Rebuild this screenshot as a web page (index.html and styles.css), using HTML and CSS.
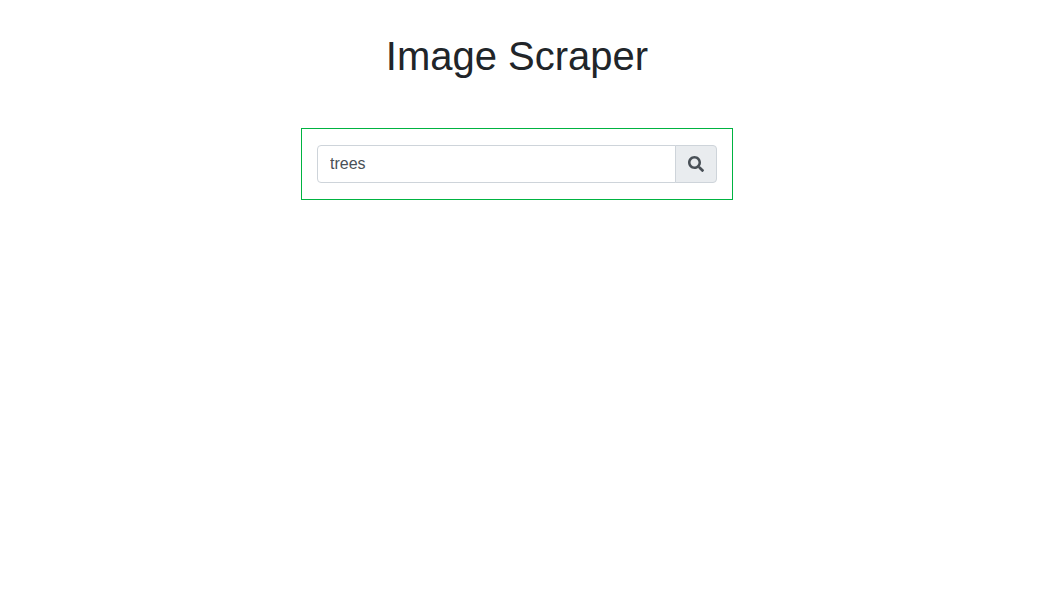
FILE: index.html
```html
<!DOCTYPE html>
<html lang="en">
<head>
<meta charset="utf-8">
<meta name="viewport" content="width=device-width, initial-scale=1">
<title>Image Scraper</title>
<link rel="stylesheet" href="styles.css">
</head>
<body>
<main class="page">
  <h1 class="title">Image Scraper</h1>
  <form class="search-box" role="search">
    <div class="input-group">
      <input class="search-input" type="text" name="query" value="trees" aria-label="Search images">
      <button class="search-button" type="submit" aria-label="Search">
        <svg class="search-icon" viewBox="0 0 512 512" aria-hidden="true"><path fill="currentColor" d="M505 442.7L405.3 343c-4.500-4.500-10.600-7-17-7H372c27.600-35.300 44-79.700 44-128C416 93.100 322.900 0 208 0S0 93.100 0 208s93.100 208 208 208c48.300 0 92.700-16.400 128-44v16.300c0 6.400 2.500 12.500 7 17l99.700 99.700c9.400 9.400 24.600 9.400 33.900 0l28.300-28.300c9.400-9.400 9.400-24.600.1-34zM208 336c-70.700 0-128-57.200-128-128 0-70.700 57.200-128 128-128 70.700 0 128 57.200 128 128 0 70.700-57.200 128-128 128z"/></svg>
      </button>
    </div>
  </form>
</main>
</body>
</html>
```
FILE: styles.css
```css
* {
  box-sizing: border-box;
}

body {
  margin: 0;
  background: #fff;
  color: #212529;
  font: 16px/24px "Liberation Sans", Arial, sans-serif;
}

.page {
  display: flex;
  flex-direction: column;
  align-items: center;
  gap: 48px;
  padding: 32px 20px 32px 15px;
}

.title {
  margin: 0;
  font-size: 40px;
  font-weight: 500;
  line-height: 48px;
  text-align: center;
}

.search-box {
  width: 100%;
  max-width: 432px;
  padding: 16px 15px;
  border: 1px solid #00b341;
}

.input-group {
  display: flex;
}

.search-input {
  flex: 1;
  min-width: 0;
  height: 38px;
  padding: 6px 12px;
  border: 1px solid #ced4da;
  border-radius: 4px 0 0 4px;
  background: #fff;
  color: #495057;
  font: inherit;
}

.search-button {
  display: flex;
  align-items: center;
  margin-left: -1px;
  padding: 6px 12px;
  border: 1px solid #ced4da;
  border-radius: 0 4px 4px 0;
  background: #e9ecef;
  color: #495057;
}

.search-icon {
  width: 16px;
  height: 16px;
}
```
